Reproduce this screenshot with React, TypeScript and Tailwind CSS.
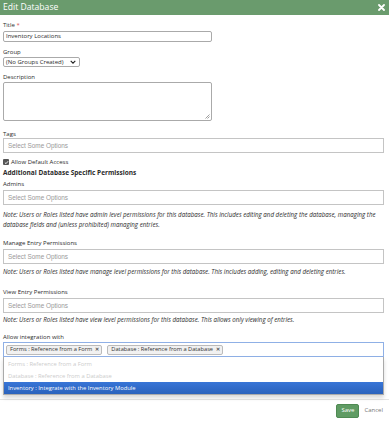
import type { ReactNode } from "react";

const ADMIN_NOTE =
  "Note: Users or Roles listed have admin level permissions for this database. This includes editing and deleting the database, managing the database fields and (unless prohibited) managing entries.";
const MANAGE_NOTE =
  "Note: Users or Roles listed have manage level permissions for this database. This includes adding, editing and deleting entries.";
const VIEW_NOTE =
  "Note: Users or Roles listed have view level permissions for this database. This allows only viewing of entries.";

function FieldLabel({ children, className = "" }: { children: ReactNode; className?: string }) {
  return <div className={`h-[8px] text-[6px] leading-[8px] text-[#2b2b2b] ${className}`}>{children}</div>;
}

// chosen-style empty multi select
function ChosenBox({ className = "" }: { className?: string }) {
  return (
    <div
      className={`flex h-[15px] items-center border border-[#c4c4c4] bg-white pl-[4px] font-['Liberation_Sans',sans-serif] text-[6.4px] text-[#999] ${className}`}
    >
      Select Some Options
    </div>
  );
}

function Note({ children, className = "" }: { children: ReactNode; className?: string }) {
  return <p className={`text-[6.2px] italic leading-[10px] text-[#2b2b2b] ${className}`}>{children}</p>;
}

function Chip({ label }: { label: string }) {
  return (
    <span className="flex h-[10px] items-center gap-[3px] rounded-[2px] border border-[#bbb] bg-[#f1f1f1] pl-[3px] pr-[2px] text-[5.7px] leading-none text-[#333]">
      {label}
      <span className="text-[5px] font-bold text-[#555]">✕</span>
    </span>
  );
}

export default function App() {
  return (
    <div className="flex h-[421px] w-[389px] flex-col overflow-hidden bg-white font-['Open_Sans',sans-serif] text-[#2b2b2b]">
      <div className="flex h-[15px] shrink-0 items-center justify-between bg-[#6a9b6d] pl-[3px] pr-[4px]">
        <span className="text-[8.6px] font-medium leading-none text-white">Edit Database</span>
        <svg width="7" height="7" viewBox="0 0 7 7">
          <path d="M1 1 L6 6 M6 1 L1 6" stroke="white" strokeWidth="1.8" strokeLinecap="round" />
        </svg>
      </div>

      <div className="flex-1 pl-[3px] pr-[5px]">
        <FieldLabel className="mt-[6px]">
          Title <span className="text-[#d9534f]">*</span>
        </FieldLabel>
        <div className="mt-[2px] flex h-[11px] w-[209px] items-center rounded-[2px] border border-[#aaa] pl-[2px] text-[6px]">
          Inventory Locations
        </div>

        <FieldLabel className="mt-[6px]">Group</FieldLabel>
        <div className="mt-[1px] flex h-[10px] w-[77px] items-center justify-between rounded-[2px] border border-[#aaa] pl-[2px] pr-[3px] text-[6px]">
          (No Groups Created)
          <svg width="6" height="4" viewBox="0 0 6 4">
            <path d="M0.7 0.8 L3 3.1 L5.3 0.8" stroke="#222" strokeWidth="1.1" fill="none" />
          </svg>
        </div>

        <FieldLabel className="mt-[6px]">Description</FieldLabel>
        <div className="relative mt-[1px] h-[39px] w-[209px] rounded-[2px] border border-[#aaa]">
          <svg className="absolute bottom-[1px] right-[1px]" width="5" height="5" viewBox="0 0 5 5">
            <path d="M4.5 0.5 L0.5 4.5 M4.5 2.5 L2.5 4.5" stroke="#777" strokeWidth="0.7" />
          </svg>
        </div>

        <FieldLabel className="mt-[9px]">Tags</FieldLabel>
        <ChosenBox />

        <div className="mt-[5px] flex h-[8px] items-center gap-[2px] text-[6px]">
          <span className="flex h-[6px] w-[6px] items-center justify-center rounded-[1px] bg-[#555]">
            <svg width="5" height="5" viewBox="0 0 5 5">
              <path d="M0.9 2.6 L2 3.7 L4.1 1.2" stroke="white" strokeWidth="0.9" fill="none" />
            </svg>
          </span>
          Allow Default Access
        </div>

        <div className="mt-[3px] h-[8px] text-[6.5px] font-bold leading-[8px]">
          Additional Database Specific Permissions
        </div>
        <FieldLabel className="mt-[3px]">Admins</FieldLabel>
        <ChosenBox className="mt-[2px]" />
        <Note className="mt-[5px]">{ADMIN_NOTE}</Note>

        <FieldLabel className="mt-[9px]">Manage Entry Permissions</FieldLabel>
        <ChosenBox className="mt-[2px]" />
        <Note className="mt-[3px]">{MANAGE_NOTE}</Note>

        <FieldLabel className="mt-[11px]">View Entry Permissions</FieldLabel>
        <ChosenBox className="mt-[2px]" />
        <Note className="mt-[2px]">{VIEW_NOTE}</Note>

        <FieldLabel className="mt-[8px]">Allow integration with</FieldLabel>
        <div className="relative mt-[1px]">
          <div className="flex h-[15px] items-center gap-[5px] border border-[#8fb0e6] bg-white pl-[2px]">
            <Chip label="Forms : Reference from a Form" />
            <Chip label="Database : Reference from a Database" />
          </div>
          {/* open dropdown */}
          <div className="absolute left-0 right-0 top-full z-10 border border-t-0 border-[#aaa] bg-white pt-[1px] text-[5.8px] shadow-[0_3px_4px_rgba(0,0,0,0.15)]">
            <div className="flex h-[12px] items-center pl-[4px] text-[#ccc]">Forms : Reference from a Form</div>
            <div className="flex h-[12px] items-center pl-[4px] text-[#ccc]">Database : Reference from a Database</div>
            <div className="flex h-[12px] items-center bg-gradient-to-b from-[#3875d7] to-[#2a62bc] pl-[4px] font-medium text-white">
              Inventory : Integrate with the Inventory Module
            </div>
          </div>
        </div>
      </div>

      <div className="flex h-[22px] shrink-0 items-center justify-end gap-[5px] border-t border-[#e5e5e5] pr-[6px]">
        <button className="flex h-[14px] w-[23px] items-center justify-center rounded-[2px] border border-[#4f8a53] bg-[#5f9b63] text-[6px] text-white">
          Save
        </button>
        <span className="text-[6px] text-[#777]">Cancel</span>
      </div>
    </div>
  );
}
